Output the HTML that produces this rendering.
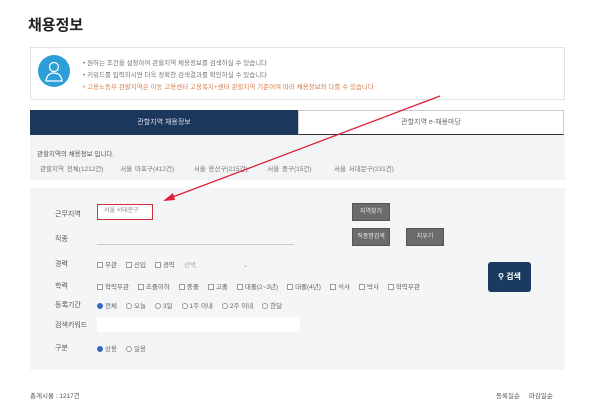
<!DOCTYPE html>
<html><head><meta charset="utf-8"><style>
*{margin:0;padding:0;box-sizing:border-box}
body{width:600px;height:415px;background:#fff;position:relative;overflow:hidden;font-family:"Liberation Sans","Noto Sans CJK KR",sans-serif;color:#555}
.a{position:absolute;white-space:nowrap}
.s{font-size:6.5px;color:#777}
.lab{font-size:7px;color:#555;left:55px}
.btn{position:absolute;background:#6b6b6b;color:#eee;font-size:6px;text-align:center;line-height:17px;border:1px solid #555}
.cb{display:inline-block;width:6px;height:6px;border:1px solid #999;background:#fff;margin-right:2px;vertical-align:-1px}
.rd{display:inline-block;width:6px;height:6px;border:1px solid #999;border-radius:50%;background:#fff;margin-right:2px;vertical-align:-1px}
.on{background:#3a64c8;border-color:#3a64c8}
.row{font-size:6.5px;color:#666}
.row span.i{margin-right:9px}
</style></head><body>
<div class="a" style="left:28px;top:14px;font-size:15px;font-weight:bold;color:#222">채용정보</div>
<div class="a" style="left:30px;top:47px;width:535px;height:53px;border:1px solid #e2e2e2;background:#fff"></div>
<div class="a" style="left:38px;top:55px;width:32px;height:32px;border-radius:50%;background:#2c9fd9"></div>
<svg class="a" style="left:44px;top:59px" width="20" height="24" viewBox="0 0 20 24"><circle cx="10" cy="8" r="4.5" fill="none" stroke="#fff" stroke-width="1.3"/><path d="M2 22 Q3 14 10 14 Q17 14 18 22 Z" fill="none" stroke="#fff" stroke-width="1.3"/></svg>
<div class="a s" style="left:83px;top:57px">• 원하는 조건을 설정하여 관할지역 채용정보를 검색하실 수 있습니다</div>
<div class="a s" style="left:83px;top:69px">• 키워드를 입력하시면 더욱 정확한 검색결과를 확인하실 수 있습니다</div>
<div class="a s" style="left:83px;top:81px;color:#d88050">• 고용노동부 관할지역은 이동 고용센터 고용복지+센터 관할지역 기준이며 따라 채용정보와 다를 수 있습니다</div>
<div class="a" style="left:30px;top:110px;width:268px;height:25px;background:#1b385c;color:#dde;font-size:7px;text-align:center;line-height:25px">관할지역 채용정보</div>
<div class="a" style="left:298px;top:110px;width:266px;height:25px;border:1px solid #ccc;border-bottom:1px solid #333;color:#666;font-size:7px;text-align:center;line-height:23px">관할지역 e-채용마당</div>
<div class="a" style="left:30px;top:135px;width:535px;height:45px;background:#f3f4f6"></div>
<div class="a s" style="left:37px;top:148px;color:#555">관할지역의 채용정보 입니다.</div>
<div class="a s" style="left:40px;top:163px;word-spacing:1px">관할지역 전체(1212건)&nbsp;&nbsp;&nbsp;&nbsp;&nbsp;&nbsp;서울 마포구(412건)&nbsp;&nbsp;&nbsp;&nbsp;&nbsp;&nbsp;&nbsp;서울 용산구(215건)&nbsp;&nbsp;&nbsp;&nbsp;&nbsp;&nbsp;&nbsp;서울 중구(15건)&nbsp;&nbsp;&nbsp;&nbsp;&nbsp;&nbsp;&nbsp;&nbsp;서울 서대문구(231건)</div>
<div class="a" style="left:30px;top:188px;width:535px;height:182px;background:#f4f5f7"></div>
<div class="a lab" style="top:209px">근무지역</div>
<div class="a" style="left:97px;top:204px;width:56px;height:16px;border:1.5px solid #d0303c;background:#fff;font-size:6px;line-height:13px;padding-left:6px;color:#888">서울 서대문구</div>
<div class="btn" style="left:352px;top:203px;width:38px;height:18px">지역찾기</div>
<div class="a lab" style="top:234px">직종</div>
<div class="a" style="left:97px;top:244px;width:197px;border-bottom:1px solid #ccc"></div>
<div class="btn" style="left:352px;top:228px;width:38px;height:18px">직종명검색</div>
<div class="btn" style="left:406px;top:228px;width:38px;height:18px">지우기</div>
<div class="a lab" style="top:259px">경력</div>
<div class="a row" style="left:97px;top:259px"><span class="i"><span class="cb"></span>무관</span><span class="i"><span class="cb"></span>신입</span><span class="i"><span class="cb"></span>경력</span><span style="color:#aaa">선택&nbsp;&nbsp;&nbsp;&nbsp;&nbsp;&nbsp;&nbsp;&nbsp;&nbsp;&nbsp;&nbsp;&nbsp;&nbsp;&nbsp;&nbsp;&nbsp;&nbsp;&nbsp;&nbsp;&nbsp;&nbsp;&nbsp;&nbsp;&nbsp;&nbsp;&nbsp;⌄</span></div>
<div class="a lab" style="top:281px">학력</div>
<div class="a row" style="left:97px;top:281px"><span class="i"><span class="cb"></span>학력무관</span><span class="i"><span class="cb"></span>초졸이하</span><span class="i"><span class="cb"></span>중졸</span><span class="i"><span class="cb"></span>고졸</span><span class="i"><span class="cb"></span>대졸(2~3년)</span><span class="i"><span class="cb"></span>대졸(4년)</span><span class="i"><span class="cb"></span>석사</span><span class="i"><span class="cb"></span>박사</span><span class="i"><span class="cb"></span>학력무관</span></div>
<div class="a lab" style="top:300px">등록기간</div>
<div class="a row" style="left:97px;top:300px"><span class="i"><span class="rd on"></span>전체</span><span class="i"><span class="rd"></span>오늘</span><span class="i"><span class="rd"></span>3일</span><span class="i"><span class="rd"></span>1주 이내</span><span class="i"><span class="rd"></span>2주 이내</span><span class="i"><span class="rd"></span>한달</span></div>
<div class="a lab" style="top:320px">검색키워드</div>
<div class="a" style="left:97px;top:317px;width:203px;height:15px;background:#fff"></div>
<div class="a lab" style="top:343px">구분</div>
<div class="a row" style="left:97px;top:343px"><span class="i"><span class="rd on"></span>상용</span><span class="i"><span class="rd"></span>일용</span></div>
<div class="a" style="left:488px;top:262px;width:43px;height:30px;background:#1b3a60;border-radius:3px;color:#fff;font-size:8px;font-weight:bold;text-align:center;line-height:30px">&#9906; 검색</div>
<div class="a s" style="left:30px;top:390px;color:#555">총게시물 : 1217건</div>
<div class="a s" style="left:496px;top:390px;color:#555">등록일순&nbsp;&nbsp;&nbsp;&nbsp;&nbsp;마감일순</div>
<svg class="a" style="left:0;top:0" width="600" height="415"><line x1="440" y1="96" x2="170" y2="198" stroke="#e0203a" stroke-width="1.3"/><path d="M163 201 L173 193 L175 200 Z" fill="#e0203a"/></svg>
</body></html>
